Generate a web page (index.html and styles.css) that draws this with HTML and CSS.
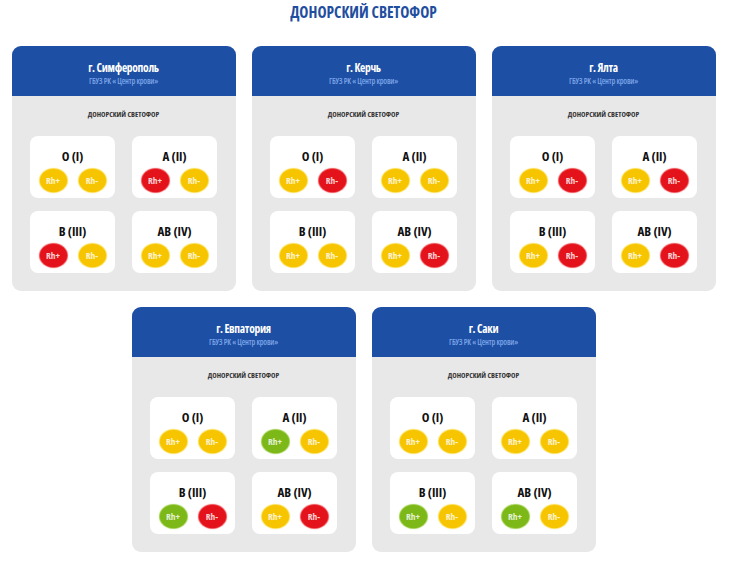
FILE: index.html
```html
<!DOCTYPE html>
<html lang="ru">
<head>
<meta charset="utf-8">
<title>Донорский светофор</title>
<link rel="stylesheet" href="styles.css">
</head>
<body>
<div class="page">
  <h1 class="page-title">ДОНОРСКИЙ СВЕТОФОР</h1>
  <div class="row">
    <section class="card">
      <header class="card-head"><h2 class="city">г. Симферополь</h2><p class="org">ГБУЗ РК « Центр крови»</p></header>
      <div class="card-body">
        <p class="label">ДОНОРСКИЙ СВЕТОФОР</p>
        <div class="grid">
          <div class="group"><div class="gname">O (I)</div><div class="dots"><span class="dot y">Rh+</span><span class="dot y">Rh-</span></div></div>
          <div class="group"><div class="gname">A (II)</div><div class="dots"><span class="dot r">Rh+</span><span class="dot y">Rh-</span></div></div>
          <div class="group"><div class="gname">B (III)</div><div class="dots"><span class="dot r">Rh+</span><span class="dot y">Rh-</span></div></div>
          <div class="group"><div class="gname">AB (IV)</div><div class="dots"><span class="dot y">Rh+</span><span class="dot y">Rh-</span></div></div>
        </div>
      </div>
    </section>
    <section class="card">
      <header class="card-head"><h2 class="city">г. Керчь</h2><p class="org">ГБУЗ РК « Центр крови»</p></header>
      <div class="card-body">
        <p class="label">ДОНОРСКИЙ СВЕТОФОР</p>
        <div class="grid">
          <div class="group"><div class="gname">O (I)</div><div class="dots"><span class="dot y">Rh+</span><span class="dot r">Rh-</span></div></div>
          <div class="group"><div class="gname">A (II)</div><div class="dots"><span class="dot y">Rh+</span><span class="dot y">Rh-</span></div></div>
          <div class="group"><div class="gname">B (III)</div><div class="dots"><span class="dot y">Rh+</span><span class="dot y">Rh-</span></div></div>
          <div class="group"><div class="gname">AB (IV)</div><div class="dots"><span class="dot y">Rh+</span><span class="dot r">Rh-</span></div></div>
        </div>
      </div>
    </section>
    <section class="card">
      <header class="card-head"><h2 class="city">г. Ялта</h2><p class="org">ГБУЗ РК « Центр крови»</p></header>
      <div class="card-body">
        <p class="label">ДОНОРСКИЙ СВЕТОФОР</p>
        <div class="grid">
          <div class="group"><div class="gname">O (I)</div><div class="dots"><span class="dot y">Rh+</span><span class="dot r">Rh-</span></div></div>
          <div class="group"><div class="gname">A (II)</div><div class="dots"><span class="dot y">Rh+</span><span class="dot r">Rh-</span></div></div>
          <div class="group"><div class="gname">B (III)</div><div class="dots"><span class="dot y">Rh+</span><span class="dot r">Rh-</span></div></div>
          <div class="group"><div class="gname">AB (IV)</div><div class="dots"><span class="dot y">Rh+</span><span class="dot r">Rh-</span></div></div>
        </div>
      </div>
    </section>
  </div>
  <div class="row">
    <section class="card">
      <header class="card-head"><h2 class="city">г. Евпатория</h2><p class="org">ГБУЗ РК « Центр крови»</p></header>
      <div class="card-body">
        <p class="label">ДОНОРСКИЙ СВЕТОФОР</p>
        <div class="grid">
          <div class="group"><div class="gname">O (I)</div><div class="dots"><span class="dot y">Rh+</span><span class="dot y">Rh-</span></div></div>
          <div class="group"><div class="gname">A (II)</div><div class="dots"><span class="dot g">Rh+</span><span class="dot y">Rh-</span></div></div>
          <div class="group"><div class="gname">B (III)</div><div class="dots"><span class="dot g">Rh+</span><span class="dot r">Rh-</span></div></div>
          <div class="group"><div class="gname">AB (IV)</div><div class="dots"><span class="dot y">Rh+</span><span class="dot r">Rh-</span></div></div>
        </div>
      </div>
    </section>
    <section class="card">
      <header class="card-head"><h2 class="city">г. Саки</h2><p class="org">ГБУЗ РК « Центр крови»</p></header>
      <div class="card-body">
        <p class="label">ДОНОРСКИЙ СВЕТОФОР</p>
        <div class="grid">
          <div class="group"><div class="gname">O (I)</div><div class="dots"><span class="dot y">Rh+</span><span class="dot y">Rh-</span></div></div>
          <div class="group"><div class="gname">A (II)</div><div class="dots"><span class="dot y">Rh+</span><span class="dot y">Rh-</span></div></div>
          <div class="group"><div class="gname">B (III)</div><div class="dots"><span class="dot g">Rh+</span><span class="dot y">Rh-</span></div></div>
          <div class="group"><div class="gname">AB (IV)</div><div class="dots"><span class="dot g">Rh+</span><span class="dot y">Rh-</span></div></div>
        </div>
      </div>
    </section>
  </div>
</div>
</body>
</html>
```

FILE: styles.css
```css
* { box-sizing: border-box; }
html, body { margin: 0; padding: 0; background: #ffffff; }
body {
  font-family: "Open Sans", "DejaVu Sans", sans-serif;
  font-stretch: 75%;
  color: #222;
}
.page {
  width: 705px;
  margin-left: 11px;
  padding-top: 4px;
}
.page-title {
  margin: 0 0 24px;
  text-align: center;
  font-size: 15.4px;
  line-height: 18px;
  font-weight: 700;
  color: #1f4e9f;
}
.row {
  display: flex;
  justify-content: center;
  gap: 16px;
  margin-bottom: 16px;
}
.card {
  width: 224px;
  height: 245px;
  background: #e8e8e8;
  border-radius: 9px;
  overflow: hidden;
}
.card-head {
  height: 50px;
  background: #1d4fa4;
  text-align: center;
  padding-top: 15px;
}
.city {
  margin: 0;
  font-size: 11.5px;
  line-height: 13px;
  font-weight: 700;
  letter-spacing: -0.3px;
  color: #ffffff;
}
.org {
  margin: 2px 0 0;
  font-size: 8px;
  line-height: 10px;
  font-weight: 600;
  letter-spacing: -0.15px;
  color: #7ea6e8;
}
.card-body {
  padding: 12px 0 0;
}
.label {
  margin: 0 0 16px;
  text-align: center;
  font-size: 7.5px;
  line-height: 12px;
  font-weight: 700;
  color: #333;
}
.grid {
  display: grid;
  grid-template-columns: 85px 85px;
  column-gap: 17px;
  row-gap: 13px;
  justify-content: center;
}
.group {
  height: 62px;
  background: #ffffff;
  border-radius: 8px;
  padding-top: 12px;
  text-align: center;
}
.gname {
  font-size: 13px;
  line-height: 16px;
  font-weight: 700;
  color: #111;
}
.dots {
  display: flex;
  justify-content: center;
  gap: 12px;
  margin-top: 5px;
}
.dot {
  width: 27px;
  height: 23px;
  border-radius: 50%;
  display: flex;
  align-items: center;
  justify-content: center;
  font-size: 9.5px;
  font-weight: 700;
  color: rgba(255, 255, 255, 0.82);
}
.dot.y { background: #f6c500; box-shadow: 0 0 1px 1px #fbdc4a; }
.dot.r { background: #e3121b; box-shadow: 0 0 1px 1px #ee4a4f; }
.dot.g { background: #7cb817; box-shadow: 0 0 1px 1px #9ccd45; }
```
